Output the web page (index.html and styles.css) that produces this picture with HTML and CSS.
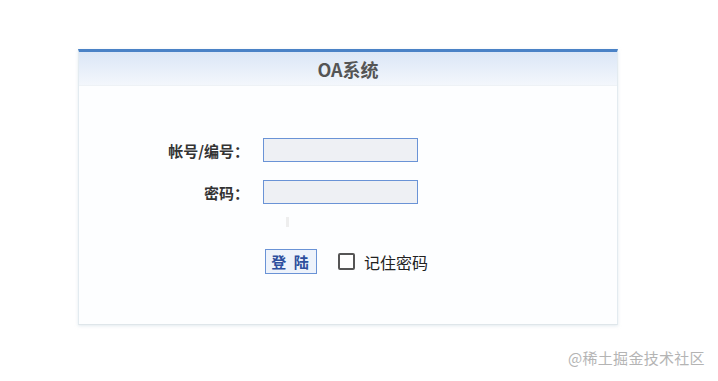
FILE: index.html
```html
<!DOCTYPE html>
<html lang="zh-CN">
<head>
    <meta charset="UTF-8">
    <meta name="viewport" content="width=device-width, initial-scale=1.0">
    <title>OA系统</title>
    <link rel="stylesheet" href="styles.css">
</head>
<body>
    <div class="login-box">
        <div class="login-header">OA系统</div>
        <div class="login-body">
            <div class="form-grid">
                <label class="form-label" for="account">帐号/编号：</label>
                <input class="form-input" id="account" type="text">
                <label class="form-label" for="password">密码：</label>
                <input class="form-input" id="password" type="password">
            </div>
            <div class="caret-mark"></div>
            <div class="form-actions">
                <button class="login-btn">登 陆</button>
                <label class="remember">
                    <input class="remember-box" type="checkbox">
                    <span>记住密码</span>
                </label>
            </div>
        </div>
    </div>
    <div class="watermark">@稀土掘金技术社区</div>
</body>
</html>
```

FILE: styles.css
```css
* {
    margin: 0;
    padding: 0;
    box-sizing: border-box;
}

body {
    font-family: "Noto Sans CJK SC", "Noto Sans", sans-serif;
    background: #fff;
    width: 718px;
    height: 381px;
    overflow: hidden;
    position: relative;
}

.login-box {
    width: 540px;
    margin: 49px 0 0 78px;
    border-top: 3px solid #4a82c6;
    border-left: 1px solid #e3ebf0;
    border-right: 1px solid #e3ebf0;
    border-bottom: 1px solid #dfe6ea;
    box-shadow: 0 1px 3px rgba(200, 215, 225, 0.5);
}

.login-header {
    height: 34px;
    background: linear-gradient(to bottom, #dbe6f6, #f3f7fc);
    border-bottom: 1px solid #eef2f6;
    text-align: center;
    line-height: 34px;
    font-size: 18px;
    font-weight: bold;
    color: #555;
}

.login-body {
    height: 238px;
    padding-top: 52px;
    background: #fdfeff;
}

.form-grid {
    display: grid;
    grid-template-columns: 170px 155px;
    column-gap: 14px;
    row-gap: 18px;
    align-items: center;
}

.form-label {
    text-align: right;
    font-size: 15px;
    font-weight: bold;
    color: #333;
}

.form-input {
    height: 24px;
    border: 1px solid #6a93d6;
    background: #eef0f4;
    outline: none;
}

.caret-mark {
    width: 3px;
    height: 10px;
    margin: 13px 0 0 207px;
    background: #eeeeee;
}

.form-actions {
    display: flex;
    align-items: center;
    margin: 22px 0 0 186px;
}

.login-btn {
    width: 52px;
    height: 25px;
    border: 1px solid #6a93d6;
    background: #eef3fb;
    color: #2d4f9e;
    font-family: inherit;
    font-size: 15px;
    font-weight: bold;
    letter-spacing: 2px;
    line-height: 22px;
}

.remember {
    display: flex;
    align-items: center;
    margin-left: 21px;
    font-size: 16px;
    color: #222;
}

.remember-box {
    appearance: none;
    width: 17px;
    height: 17px;
    border: 2px solid #555;
    border-radius: 2px;
    background: #fff;
    margin-right: 9px;
}

.watermark {
    position: absolute;
    left: 568px;
    top: 347px;
    font-size: 15px;
    color: #b4b4b4;
    letter-spacing: 0.3px;
}
```
